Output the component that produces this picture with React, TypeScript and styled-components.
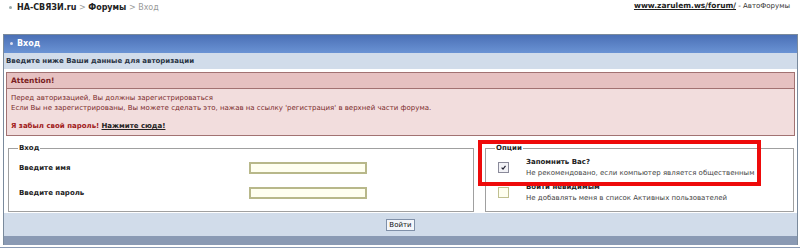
import React from 'react';
import styled, { createGlobalStyle } from 'styled-components';

const GlobalStyle = createGlobalStyle`
  html, body {
    margin: 0;
    padding: 0;
    background: #ffffff;
  }
  body {
    font-family: "DejaVu Sans", Verdana, sans-serif;
    font-size: 7px;
    color: #222;
    width: 800px;
    height: 248px;
    overflow: hidden;
  }
`;

const Page = styled.div`
  position: relative;
  width: 800px;
  height: 248px;
`;

const TopRow = styled.div`
  display: flex;
  justify-content: space-between;
  height: 34px;
`;

const Crumbs = styled.div`
  padding: 3px 0 0 9px;
  font-size: 8px;
  line-height: 10px;
  color: #999;

  b {
    color: #222;
  }
  .dot {
    display: inline-block;
    width: 3px;
    height: 3px;
    margin: 0 5px 1px 0;
    background: #9aa;
    border-radius: 50%;
  }
`;

const SiteLink = styled.div`
  padding: 1px 10px 0 0;
  font-size: 7px;
  line-height: 10px;
  color: #333;

  a {
    color: #222;
    font-weight: bold;
    font-size: 7.5px;
  }
`;

const Panel = styled.div`
  margin: 0 2px 0 3px;
  border: 1px solid #7a8a9c;
  border-bottom: none;
  background: #fff;
`;

const TitleBar = styled.div`
  height: 18px;
  line-height: 18px;
  padding-left: 6px;
  background: linear-gradient(#4b70b6, #6a93d4);
  color: #fff;
  font-weight: bold;
  font-size: 8px;

  .dot {
    display: inline-block;
    width: 3px;
    height: 3px;
    margin: 0 4px 1px 0;
    background: #dde;
    border-radius: 50%;
  }
`;

const SubBar = styled.div`
  height: 16px;
  line-height: 16px;
  padding-left: 2px;
  background: #d1dcea;
  color: #2a3444;
  font-weight: bold;
`;

const Alert = styled.div`
  margin: 3px 2px 0 2px;
  border: 1px solid #a27272;
  background: #f2dddd;
`;

const AlertHead = styled.div`
  height: 15px;
  line-height: 15px;
  padding-left: 4px;
  background: #e6c1c1;
  border-bottom: 1px solid #a27272;
  color: #7a1e1e;
  font-weight: bold;
  font-size: 7.5px;
`;

const AlertBody = styled.div`
  padding: 4px 4px 4px 4px;
  color: #7a2a2a;
  line-height: 10px;

  p {
    margin: 0;
  }
  .gap {
    height: 8px;
  }
  .forgot {
    color: #a01818;
    font-weight: bold;
  }
  a {
    color: #222;
    font-weight: bold;
    text-decoration: underline;
  }
`;

const Columns = styled.div`
  display: grid;
  grid-template-columns: 466px 1fr;
  gap: 11px;
  padding: 8px 3px 0 4px;
  height: 77px;
  box-sizing: border-box;
`;

const Box = styled.fieldset`
  margin: 0;
  padding: 3px 8px 0 8px;
  border: 1px solid #a0a0a0;
  height: 68px;
  box-sizing: border-box;

  legend {
    padding: 0 1px;
    margin-left: 1px;
    font-weight: bold;
    color: #222;
    font-size: 7px;
  }
`;

const FieldRow = styled.div`
  display: grid;
  grid-template-columns: 230px 118px;
  align-items: center;
  height: 25px;
  font-weight: bold;
  color: #222;
  padding-left: 2px;
`;

const Input = styled.input`
  width: 118px;
  height: 12px;
  box-sizing: border-box;
  border: 2px solid #b8b88a;
  background: #fffff0;
  padding: 0;
`;

const OptRow = styled.div`
  display: grid;
  grid-template-columns: 32px 1fr;
  align-items: center;
  height: 25px;
  line-height: 11px;

  b {
    display: block;
    color: #222;
  }
  span {
    color: #444;
  }
`;

const Check = styled.span<{ $on?: boolean }>`
  display: inline-block;
  width: 9px;
  height: 9px;
  margin-left: 4px;
  border: 1px solid ${p => (p.$on ? '#8a8a9a' : '#c0c090')};
  background: ${p => (p.$on ? '#f2f2f6' : '#fffff0')};
  position: relative;

  svg {
    position: absolute;
    left: 2px;
    top: 2px;
  }
`;

const Footer = styled.div`
  height: 23px;
  background: #d1dcea;
  display: flex;
  align-items: center;
  justify-content: center;
`;

const Button = styled.button`
  font-family: "DejaVu Sans", Verdana, sans-serif;
  font-size: 7px;
  height: 12px;
  padding: 0 2px;
  border: 1px solid #8090a8;
  background: #f4f6fa;
  color: #111;
  line-height: 10px;
`;

const DarkBar = styled.div<{ $h: number }>`
  height: ${p => p.$h}px;
  background: #8a9ab4;
`;

const Gap = styled.div`
  height: 2px;
  background: #fff;
`;

const Marker = styled.div`
  position: absolute;
  left: 478px;
  top: 140px;
  width: 283px;
  height: 46px;
  box-sizing: border-box;
  border: 4px solid #ee0a0a;
  pointer-events: none;
`;

const Tick = () => (
  <svg width="5" height="5" viewBox="0 0 5 5">
    <path d="M0.6 2.6 L2 4 L4.5 0.8" stroke="#223" strokeWidth="1.2" fill="none" />
  </svg>
);

const App = () => {
  return (
    <Page>
      <GlobalStyle />
      <TopRow>
        <Crumbs>
          <span className="dot" />
          <b>НА-СВЯЗИ.ru</b> &gt; <b>Форумы</b> &gt; Вход
        </Crumbs>
        <SiteLink>
          <a href="#">www.zarulem.ws/forum/</a> - АвтоФорумы
        </SiteLink>
      </TopRow>

      <Panel>
        <TitleBar>
          <span className="dot" />
          Вход
        </TitleBar>
        <SubBar>Введите ниже Ваши данные для авторизации</SubBar>

        <Alert>
          <AlertHead>Attention!</AlertHead>
          <AlertBody>
            <p>Перед авторизацией, Вы должны зарегистрироваться</p>
            <p>
              Если Вы не зарегистрированы, Вы можете сделать это, нажав на ссылку 'регистрация' в верхней части
              форума.
            </p>
            <div className="gap" />
            <p>
              <span className="forgot">Я забыл свой пароль!</span> <a href="#">Нажмите сюда!</a>
            </p>
          </AlertBody>
        </Alert>

        <Columns>
          <Box>
            <legend>Вход</legend>
            <FieldRow>
              <span>Введите имя</span>
              <Input type="text" />
            </FieldRow>
            <FieldRow>
              <span>Введите пароль</span>
              <Input type="password" />
            </FieldRow>
          </Box>
          <Box>
            <legend>Опции</legend>
            <OptRow>
              <Check $on>
                <Tick />
              </Check>
              <div>
                <b>Запомнить Вас?</b>
                <span>Не рекомендовано, если компьютер является общественным</span>
              </div>
            </OptRow>
            <OptRow>
              <Check />
              <div>
                <b>Войти невидимым</b>
                <span>Не добавлять меня в список Активных пользователей</span>
              </div>
            </OptRow>
          </Box>
        </Columns>

        <Footer>
          <Button>Войти</Button>
        </Footer>
        <DarkBar $h={9} />
      </Panel>
      <Gap />
      <DarkBar $h={4} />

      <Marker />
    </Page>
  );
};

export default App;
